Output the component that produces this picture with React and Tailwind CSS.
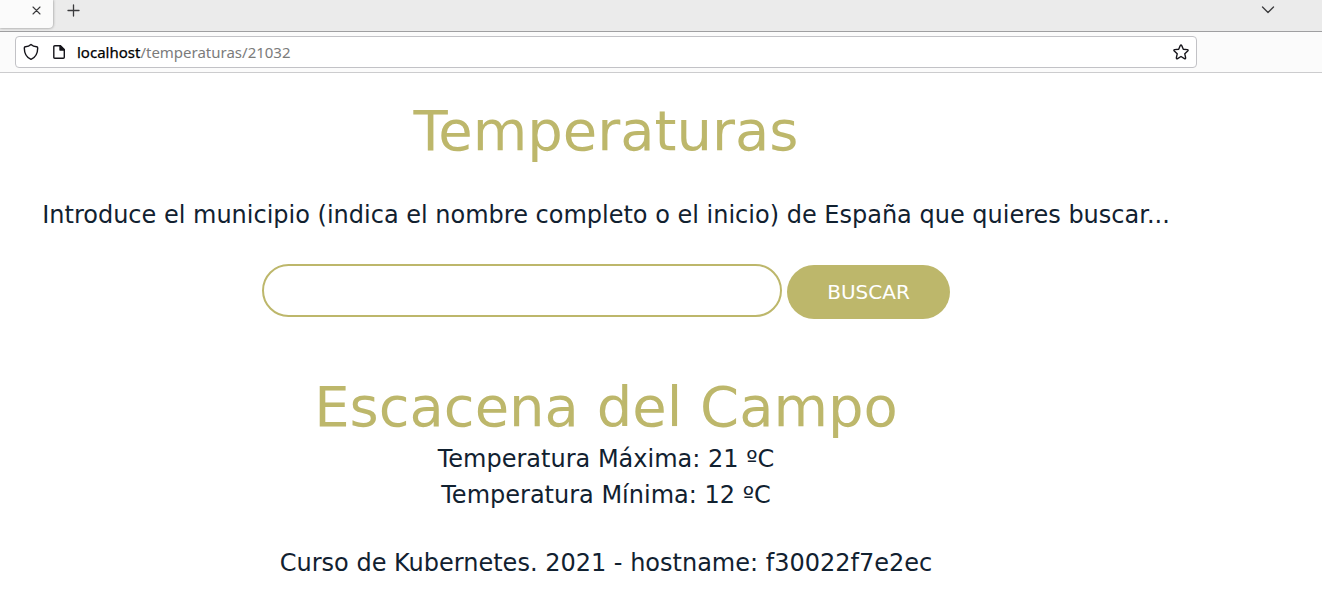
import React from "react";

function TabStrip() {
  return (
    <div className="flex h-8 items-start border-b border-[#9f9fa1] bg-[#ebebeb]">
      <div className="flex h-[28px] w-[53px] justify-end rounded-br-[4px] bg-[#fbfbfb] pr-[12.500px] pt-[6px] shadow-[0_0_3px_rgba(0,0,0,0.45)]">
        <svg width="9" height="9" viewBox="0 0 9 9" className="shrink-0" stroke="#3a3a3c" strokeWidth="1.1" strokeLinecap="round"><path d="M1 1l7 7M8 1L1 8" /></svg>
      </div>
      <svg width="13" height="13" viewBox="0 0 13 13" className="ml-[14px] mt-[4px]" stroke="#3a3a3c" strokeWidth="1.3" strokeLinecap="round"><path d="M6.500 1v11M1 6.500h11" /></svg>
      <svg width="14" height="8" viewBox="0 0 14 8" className="mr-[47px] ml-auto mt-[6px]" fill="none" stroke="#3a3a3c" strokeWidth="1.3" strokeLinecap="round" strokeLinejoin="round"><path d="M1.500 1L7 6.500L12.500 1" /></svg>
    </div>
  );
}

function AddressBar() {
  return (
    <div className="flex h-[41px] items-start border-b border-[#ccccce] bg-[#fbfbfb] pt-1 pl-[15px]">
      <div className="flex h-8 w-[1182px] items-center rounded-[4px] border border-[#c2c2c6] bg-white pr-[7px] pl-[7px]">
        <svg width="16" height="18" viewBox="0 0 16 18" fill="none" stroke="#15141a" strokeWidth="1.4" strokeLinejoin="round"><path d="M8 1.500C9.500 3 12 3.700 13.600 3.700Q14.700 3.800 14.700 5C14.700 10.500 12.300 14.500 8 16.400C3.700 14.500 1.300 10.500 1.300 5Q1.300 3.800 2.400 3.700C4 3.700 6.500 3 8 1.500Z" /></svg>
        <svg width="14" height="16" viewBox="0 0 14 16" className="ml-[13px]" fill="none" stroke="#15141a" strokeWidth="1.4" strokeLinejoin="round"><path d="M2.800 1.800h5.700l3.800 3.800v7.600q0 1-1 1H2.800q-1 0-1-1V2.800q0-1 1-1z" /><path d="M8 2v4h4z" fill="#15141a" /></svg>
        <span className="mb-px ml-[11px] font-['Noto_Sans',sans-serif] text-[15px] leading-5 text-black"><span className="[-webkit-text-stroke:0.25px_black]">localhost</span><span className="text-[#7b7b7b]">/temperaturas/21032</span></span>
        <svg width="16" height="16" viewBox="0 0 16 16" className="ml-auto" fill="none" stroke="#15141a" strokeWidth="1.4" strokeLinejoin="round"><path d="M7.300 1.500Q8 .2 8.700 1.500L10.300 5.200L14.300 5.600Q15.700 5.900 14.700 7L11.800 9.800L12.600 13.700Q12.700 15.200 11.400 14.600L8 12.500L4.600 14.600Q3.300 15.200 3.400 13.700L4.200 9.800L1.300 7Q.3 5.900 1.700 5.600L5.700 5.200Z" /></svg>
      </div>
    </div>
  );
}

export default function App() {
  return (
    <div className="h-[613px] overflow-hidden bg-white">
      <TabStrip />
      <AddressBar />
      <main className="flex w-[1212px] flex-col items-center font-['DejaVu_Sans',sans-serif] text-[24px] leading-9 whitespace-nowrap text-[#112130]">
        <h1 className="mt-[24px] text-[56px] leading-[67px] text-[#bdb76b]">Temperaturas</h1>
        <p className="mt-[33px]">Introduce el municipio (indica el nombre completo o el inicio) de España que quieres buscar...</p>
        <form className="mt-[31px] flex h-[55px] gap-[5px]" onSubmit={(e) => e.preventDefault()}>
          <input aria-label="Municipio" className="h-[53px] w-[520px] rounded-full border-2 border-[#bdb76b] bg-white px-6 outline-none" />
          <button className="mt-px h-[54px] w-[163px] rounded-full bg-[#bdb76b] text-[20px] text-white">BUSCAR</button>
        </form>
        <h2 className="mt-[54px] text-[56px] leading-[67px] text-[#bdb76b]">Escacena del Campo</h2>
        <p className="mt-px">Temperatura Máxima: 21 ºC</p>
        <p>Temperatura Mínima: 12 ºC</p>
        <p className="mt-8">Curso de Kubernetes. 2021 - hostname: f30022f7e2ec</p>
      </main>
    </div>
  );
}
